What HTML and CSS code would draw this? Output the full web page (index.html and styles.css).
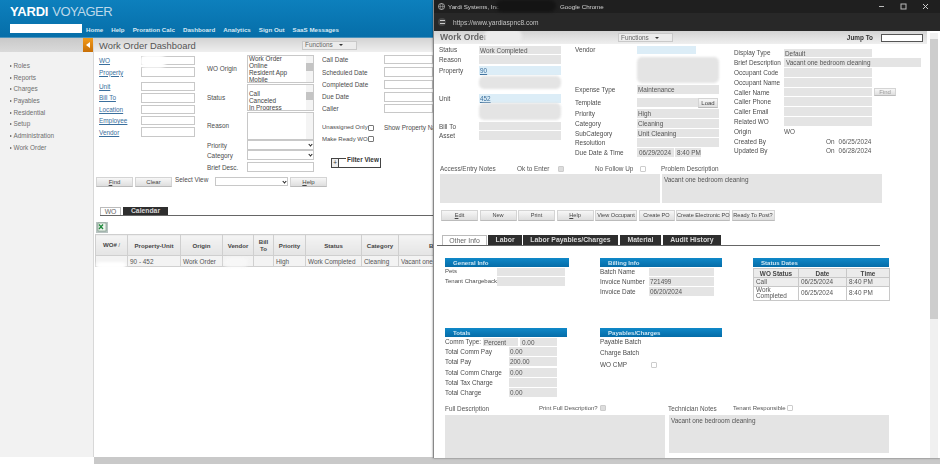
FILE: index.html
```html
<!DOCTYPE html>
<html lang="en">
<head>
<meta charset="utf-8">
<title>Work Order Dashboard</title>
<link rel="stylesheet" href="styles.css">
</head>
<body>
<div class="desktop">
  <div class="page">
    <header class="top">
      <div class="logo"><b>YARDI</b><span>VOYAGER</span></div>
      <div class="topnav">
        <div class="topsearch"></div>
        <nav class="navlinks"><a>Home</a><a>Help</a><a>Proration Calc</a><a>Dashboard</a><a>Analytics</a><a>Sign Out</a><a>SaaS Messages</a></nav>
      </div>
    </header>
    <div class="pagebody">
      <aside class="side">
        <div class="sidehead"><span class="collapse"><svg width="4" height="6" viewBox="0 0 4 6"><path d="M4 0v6L0 3z" fill="#fff"/></svg></span></div>
        <ul class="menu">
          <li>Roles</li><li>Reports</li><li>Charges</li><li>Payables</li><li>Residential</li><li>Setup</li><li>Administration</li><li>Work Order</li>
        </ul>
      </aside>
      <main class="dash">
        <div class="bar">
          <h1 class="dashtitle">Work Order Dashboard</h1>
          <div class="fnbtn dashfn">Functions <i class="caret"></i></div>
        </div>
        <div class="filters">
          <div class="fcol fcol1">
            <div class="frow"><a class="lnk">WO</a><span class="inp"></span></div>
            <div class="frow"><a class="lnk">Property</a><span class="inp"></span></div>
            <div class="frow mt3"><a class="lnk">Unit</a><span class="inp"></span></div>
            <div class="frow"><a class="lnk">Bill To</a><span class="inp"></span></div>
            <div class="frow"><a class="lnk">Location</a><span class="inp"></span></div>
            <div class="frow"><a class="lnk">Employee</a><span class="inp"></span></div>
            <div class="frow"><a class="lnk">Vendor</a><span class="inp"></span></div>
          </div>
          <div class="fcol fcol2">
            <div class="frow2 list"><label>WO Origin</label><div class="lbox"><div class="opts">Work Order<br>Online<br>Resident App<br>Mobile</div><div class="lscroll"><em></em></div></div></div>
            <div class="frow2 list"><label>Status</label><div class="lbox"><div class="opts"><br>Call<br>Canceled<br>In Progress</div><div class="lscroll"><em></em></div></div></div>
            <div class="frow2 list"><label>Reason</label><div class="lbox"><div class="opts"></div><div class="lscroll blank"></div></div></div>
            <div class="frow2"><label>Priority</label><div class="sel"><i class="chev"></i></div></div>
            <div class="frow2"><label>Category</label><div class="sel"><i class="chev"></i></div></div>
            <div class="frow2 mt1"><label>Brief Desc.</label><div class="sel"></div></div>
          </div>
          <div class="fcol fcol3">
            <div class="frow3"><label>Call Date</label><span class="inp"></span></div>
            <div class="frow3 g3"><label>Scheduled Date</label><span class="inp"></span></div>
            <div class="frow3 g4"><label>Completed Date</label><span class="inp"></span></div>
            <div class="frow3 g4"><label>Due Date</label><span class="inp"></span></div>
            <div class="frow3 g2"><label>Caller</label><span class="inp"></span></div>
            <div class="frow3 g6 tight"><label>Unassigned Only</label><span class="cbx"></span><label class="showprop">Show Property Name</label></div>
            <div class="frow3 g2 tight"><label>Make Ready WOs</label><span class="cbx"></span></div>
            <div class="filterview"><span class="plus">+</span><span class="legend">Filter View</span></div>
          </div>
        </div>
        <div class="finds">
          <button class="btn w37"><u>F</u>ind</button>
          <button class="btn w37">Clear</button>
          <span class="selview">Select View</span>
          <div class="sel viewsel"><i class="chev"></i></div>
          <button class="btn w37"><u>H</u>elp</button>
        </div>
        <div class="tabs dashtabs">
          <span class="tab on">WO</span><span class="tab">Calendar</span>
        </div>
        <div class="xl"><svg width="12" height="11" viewBox="0 0 12 11"><rect width="12" height="11" fill="#b9c4c2"/><rect x="2" y="1" width="8" height="8" fill="#eef4ee" stroke="#6d8f78" stroke-width=".6"/><path d="M3 2.5 7 7M7 2.5 3 7" stroke="#1f8a3c" stroke-width="1.3"/></svg></div>
        <div class="gridclip">
        <table class="grid">
          <colgroup><col class="c1"><col class="c2"><col class="c3"><col class="c4"><col class="c5"><col class="c6"><col class="c7"><col class="c8"><col class="c9"></colgroup>
          <thead><tr><th>WO# <small>/</small></th><th>Property-Unit</th><th>Origin</th><th>Vendor</th><th>Bill<br>To</th><th>Priority</th><th>Status</th><th>Category</th><th>Brief Description</th></tr></thead>
          <tbody><tr><td></td><td>90 - 452</td><td>Work Order</td><td></td><td></td><td>High</td><td>Work Completed</td><td>Cleaning</td><td>Vacant one bedroom cleaning</td></tr></tbody>
        </table>
        </div>
      </main>
    </div>
    <div class="hscroll"></div>
    <span class="blob b1"></span><span class="blob b2"></span><span class="blob b3"></span>
  </div>

  <section class="win">
    <div class="wintitle">
      <svg class="globe" width="7" height="7" viewBox="0 0 8 8"><circle cx="4" cy="4" r="3.5" fill="none" stroke="#ccc" stroke-width=".8"/><path d="M.5 4h7M4 .5c-2 2-2 5 0 7M4 .5c2 2 2 5 0 7" fill="none" stroke="#ccc" stroke-width=".5"/></svg>
      <span class="t1">Yardi Systems, Inc. -</span><span class="t2">Google Chrome</span>
      <div class="winctl">
        <svg width="7" height="7" viewBox="0 0 7 7"><path d="M1 3.5h5" stroke="#bbb"/></svg>
        <svg width="7" height="7" viewBox="0 0 7 7"><rect x="1" y="1" width="5" height="5" fill="none" stroke="#bbb"/></svg>
        <svg width="7" height="7" viewBox="0 0 7 7"><path d="m1 1 5 5M6 1 1 6" stroke="#ccc"/></svg>
      </div>
    </div>
    <div class="winurl">
      <span class="tune"><svg width="7" height="6" viewBox="0 0 7 6"><path d="M1 1.5h5M1 4.5h5" stroke="#ccc"/></svg></span>
      <span class="url">https://www.yardiaspnc8.com</span>
    </div>
    <div class="winbody">
      <div class="bar wbar">
        <h2 class="wtitle">Work Order</h2>
        <div class="fnbtn wfn">Functions <i class="caret"></i></div>
        <div class="jump"><b>Jump To</b><span class="jinp"></span></div>
      </div>
      <div class="wscroll"><em></em></div>
      <div class="wo">
        <div class="wcol wc1">
          <div class="wrow"><label>Status</label><span class="val">Work Completed</span></div>
          <div class="wrow"><label>Reason</label><span class="val"></span></div>
          <div class="wrow sp1"><label>Property</label><span class="val blue"><a class="lnk">90</a></span></div>
          <div class="wrow tall13 sp1"><label></label><span class="val mask"></span></div>
          <div class="wrow sp4"><label>Unit</label><span class="val blue"><a class="lnk">452</a></span></div>
          <div class="wrow tall16"><label></label><span class="val mask"></span></div>
          <div class="wrow sp1"><label>Bill To</label><span class="val"></span></div>
          <div class="wrow"><label>Asset</label><span class="val"></span></div>
        </div>
        <div class="wcol wc2">
          <div class="wrow"><label>Vendor</label><span class="val blue short"></span></div>
          <div class="wrow tall26 sp2"><label></label><span class="val mask"></span></div>
          <div class="wrow sp2"><label>Expense Type</label><span class="val">Maintenance</span></div>
          <div class="wrow sp3"><label>Template</label><span class="val tmpl"></span><button class="btn load">Load</button></div>
          <div class="wrow sp1"><label>Priority</label><span class="val">High</span></div>
          <div class="wrow"><label>Category</label><span class="val">Cleaning</span></div>
          <div class="wrow"><label>SubCategory</label><span class="val">Unit Cleaning</span></div>
          <div class="wrow"><label>Resolution</label><span class="val"></span></div>
          <div class="wrow"><label>Due Date &amp; Time</label><span class="val dd">06/29/2024</span><span class="val tm">8:40 PM</span></div>
        </div>
        <div class="wcol wc3">
          <div class="wrow sp3"><label>Display Type</label><span class="val">Default</span></div>
          <div class="wrow"><label>Brief Description</label><span class="val wide">Vacant one bedroom cleaning</span></div>
          <div class="wrow"><label>Occupant Code</label><span class="val"></span></div>
          <div class="wrow"><label>Occupant Name</label><span class="val"></span></div>
          <div class="wrow"><label>Caller Name</label><span class="val"></span><button class="btn find">Find</button></div>
          <div class="wrow"><label>Caller Phone</label><span class="val"></span></div>
          <div class="wrow"><label>Caller Email</label><span class="val"></span></div>
          <div class="wrow"><label>Related WO</label><span class="val"></span></div>
          <div class="wrow"><label>Origin</label><span class="plain">WO</span></div>
          <div class="wrow"><label>Created By</label><span class="stamp">On<i>06/25/2024</i></span></div>
          <div class="wrow"><label>Updated By</label><span class="stamp">On<i>06/28/2024</i></span></div>
        </div>
      </div>
      <div class="notehead">
        <span class="nh1">Access/Entry Notes</span><span class="nh2">Ok to Enter</span><span class="cbx off chk"></span>
        <span class="nh3">No Follow Up</span><span class="cbx off"></span><span class="nh4">Problem Description</span>
      </div>
      <div class="notes"><div class="area"></div><div class="area">Vacant one bedroom cleaning</div></div>
      <div class="wbtns">
        <button class="btn w37"><u>E</u>dit</button><button class="btn w37">New</button><button class="btn w37">Print</button><button class="btn w37"><u>H</u>elp</button>
        <button class="btn w42">View Occupant</button><button class="btn w36">Create PO</button><button class="btn w54">Create Electronic PO</button><button class="btn w43">Ready To Post?</button>
      </div>
      <div class="tabs wtabs">
        <span class="tab on">Other Info</span><span class="tab">Labor</span><span class="tab">Labor Payables/Charges</span><span class="tab">Material</span><span class="tab">Audit History</span>
      </div>
      <div class="sections">
        <div class="sec s1">
          <div class="shead">General Info</div>
          <div class="srow"><label>Pets</label><span class="val"></span></div>
          <div class="srow"><label>Tenant Chargeback</label><span class="val"></span></div>
        </div>
        <div class="sec s2">
          <div class="shead">Billing Info</div>
          <div class="srow"><label>Batch Name</label><span class="val"></span></div>
          <div class="srow"><label>Invoice Number</label><span class="val">721499</span></div>
          <div class="srow"><label>Invoice Date</label><span class="val">06/20/2024</span></div>
        </div>
        <div class="sec s3">
          <div class="shead">Status Dates</div>
          <table class="dates">
            <colgroup><col class="d1"><col class="d2"><col class="d3"></colgroup>
            <thead><tr><th>WO Status</th><th>Date</th><th>Time</th></tr></thead>
            <tbody><tr class="alt"><td>Call</td><td>06/25/2024</td><td>8:40 PM</td></tr><tr><td>Work Completed</td><td>06/25/2024</td><td>8:40 PM</td></tr></tbody>
          </table>
        </div>
      </div>
      <div class="sections second">
        <div class="sec s4">
          <div class="shead">Totals</div>
          <div class="srow comm"><label>Comm Type:</label><span class="val pct">Percent</span><span class="val amt">0.00</span></div>
          <div class="srow"><label>Total Comm Pay</label><span class="val">0.00</span></div>
          <div class="srow"><label>Total Pay</label><span class="val">200.00</span></div>
          <div class="srow sp1b"><label>Total Comm Charge</label><span class="val">0.00</span></div>
          <div class="srow"><label>Total Tax Charge</label><span class="val"></span></div>
          <div class="srow"><label>Total Charge</label><span class="val">0.00</span></div>
        </div>
        <div class="sec s2">
          <div class="shead">Payables/Charges</div>
          <div class="srow"><label>Payable Batch</label></div>
          <div class="srow sp2b"><label>Charge Batch</label></div>
          <div class="srow sp3b"><label>WO CMP</label><span class="cbx off"></span></div>
        </div>
      </div>
      <div class="deschead">
        <span class="dh1">Full Description</span><span class="dh2">Print Full Description?</span><span class="cbx off chk"></span>
        <span class="dh3">Technician Notes</span><span class="dh4">Tenant Responsible</span><span class="cbx off"></span>
      </div>
      <div class="descs"><div class="area big"></div><div class="area small">Vacant one bedroom cleaning</div></div>
      <span class="blob wb1"></span>
    </div>
    <span class="blob wb2"></span>
  </section>
</div>
</body>
</html>
```
FILE: styles.css
```css
*{box-sizing:border-box}
html,body{margin:0;padding:0;background:#fff}
body{width:940px;height:464px;overflow:hidden;font:6.4px/9px "Liberation Sans",Arial,sans-serif;color:#4c4c4c}
.desktop{position:relative;width:940px;height:464px;overflow:hidden;filter:blur(.3px)}
.page{display:flex;flex-direction:column;height:464px}
ul{list-style:none;margin:0;padding:0}
h1,h2{margin:0;font-weight:400}
label{display:block}

/* header */
.top{height:38px;flex:none;padding:5px 0 0 10px;background:linear-gradient(#0d80bd,#066ea9);border-bottom:1px solid #4a93bd}
.logo{font-size:13px;line-height:13px;color:#fff;height:18px;letter-spacing:-.2px}
.logo b{margin-right:4px}
.logo span{color:#bcd9ea;letter-spacing:-.5px}
.topnav{display:flex;align-items:center;height:10px}
.topsearch{width:72px;height:9px;background:#fff}
.navlinks{display:flex;gap:8px;margin-left:4px;padding-top:2px;font-size:6.2px;font-weight:700;color:#d6e8f3}

/* left */
.pagebody{flex:1;display:flex;min-height:0}
.side{width:94px;flex:none;background:#f2f2f2;border-right:1px solid #d8d8d8}
.sidehead{height:14px;background:linear-gradient(#c9c9c9,#dadada);display:flex;justify-content:flex-end}
.collapse{width:10px;height:14px;background:linear-gradient(#f29a1a,#c86f06);display:flex;align-items:center;justify-content:center}
.menu{padding:8px 0 0 10px;color:#6e6e6e}
.menu li{height:11.7px;line-height:11.7px;display:flex;align-items:center;gap:1.5px}
.menu li:before{content:"";border-left:2px solid #555;border-top:1.5px solid transparent;border-bottom:1.5px solid transparent}
.dash{flex:1;min-width:0;background:#fff}
.bar{height:14px;background:linear-gradient(#d3d3d3,#efefef);display:flex;align-items:center}
.dashtitle{font-size:9.4px;color:#555;margin-left:5px;width:203px}
.fnbtn{height:9px;line-height:8px;border:1px solid #c9c9c9;background:#ececec;color:#666;padding-left:2px;display:flex;align-items:center;gap:3px}
.dashfn{width:55px}
.caret{border-top:2px solid #333;border-left:2px solid transparent;border-right:2px solid transparent;margin-left:3px}

/* filter form */
.filters{display:flex;height:124px;padding:3px 0 0 5px;overflow:hidden}
.fcol{display:flex;flex-direction:column;flex:none}
.fcol1{width:108px;gap:2px;padding-top:1px}
.frow{display:flex;height:9.4px;align-items:center}
.frow .lnk{width:42px}
.lnk{color:#3a6f9d;text-decoration:underline}
.inp{display:block;height:9.4px;border:1px solid #c8c8c8;background:#fff;width:54px}
.mt3{margin-top:3px}
.mt1{margin-top:2px}
.fcol2{width:115px;gap:1px}
.frow2{display:flex;align-items:center;height:9px}
.frow2 label{width:40px}
.frow2.list{height:27.5px}
.lbox{width:67px;height:27.5px;border:1px solid #c8c8c8;display:flex;font-size:6.4px;line-height:6.9px;color:#444}
.opts{flex:1;padding-left:1px;overflow:hidden;white-space:nowrap}
.lscroll{width:7px;background:#f4f4f4;padding-top:7px}
.lscroll em{display:block;height:8px;background:#c4c4c4}
.sel{position:relative;width:67px;height:9.4px;border:1px solid #c8c8c8;background:#fff}
.chev{position:absolute;right:1px;top:2px;width:3px;height:3px;border-right:1px solid #222;border-bottom:1px solid #222;transform:rotate(45deg)}
.fcol3{width:111px;overflow:hidden}
.frow3{display:flex;align-items:center;height:9.4px;white-space:nowrap}
.frow3 label{flex:none}
.frow3 label:first-child{width:62px}
.frow3 .inp{width:60px}
.tight label:first-child{font-size:6px;width:46px}
.g2{margin-top:2px}.g3{margin-top:3px}.g4{margin-top:3px}.g6{margin-top:10px}
.cbx{display:block;flex:none;width:6px;height:6px;border:1px solid #777;background:#fff;border-radius:1px}
.showprop{margin-left:10px}
.cbx.off{border-color:#ccc}
.cbx.chk{background:#ddd}
.filterview{position:relative;flex:none;margin:14px 0 0 9px;width:50px;height:10px;border:1px solid #444;color:#333;display:flex}
.plus{width:7px;border-right:1px solid #444;text-align:center;background:#eee;line-height:8px}
.legend{position:absolute;left:14px;top:-3px;background:#fff;font-weight:700;padding:0 1px;line-height:7px}

.finds{display:flex;align-items:center;height:11px;padding-left:2px;gap:2px}
.btn{display:block;height:10px;padding:0;border:1px solid #d4d4d4;border-bottom-color:#bbb;background:linear-gradient(#f7f7f7,#dedede);font:6px/8px "Liberation Sans",Arial,sans-serif;color:#444;flex:none;white-space:nowrap}
.w37{width:37px}.w42{width:42px}.w36{width:36px}.w54{width:54px}.w43{width:43px}
.selview{width:39px;padding-left:1px;margin-top:-4px}
.viewsel{width:73px}
.tabs{display:flex;align-items:flex-end;border-bottom:1px solid #666;gap:1px;font-weight:700}
.tab{display:block;background:#2e2e2e;color:#d8d8d8;text-align:center}
.tab.on{background:#fff;color:#666;font-weight:400;border:1px solid #bbb;border-bottom:0}
.dashtabs{height:9px;margin:20px 0 0 6px}
.dashtabs .tab{font-size:6.8px;line-height:8px;height:8px}
.dashtabs .tab:first-child{width:21px}
.dashtabs .tab:last-child{width:45px;margin-left:1px}
.xl{margin:6px 0 0 2px;height:12px}
.xl svg{display:block}
.gridclip{width:338px;margin-left:1px;overflow:hidden}
.grid{border-collapse:collapse;table-layout:fixed;width:413px}
.c1{width:32px}.c2{width:53px}.c3{width:42px}.c4{width:31px}.c5{width:20px}.c6{width:32px}.c7{width:56px}.c8{width:37px}.c9{width:110px}
.grid th{height:21px;background:linear-gradient(#f4f4f4,#e4e4e4);border:1px solid #cfcfcf;font-size:6.1px;line-height:7px;color:#444;padding:0}
.grid small{font-weight:400;font-size:5px}
.grid td{height:11px;background:#f3f3f3;border:1px solid #d0d0d0;padding:0 0 0 2px;white-space:nowrap;overflow:hidden;color:#555}
.hscroll{height:7px;margin-left:94px;background:#c9c9c9;flex:none}

/* chrome window */
.win{position:absolute;left:433px;top:0;width:507px;height:458px;background:#fff;border-left:1px solid #888;box-shadow:0 0 2px rgba(0,0,0,.5);display:flex;flex-direction:column}
.wintitle{height:13px;flex:none;background:#1f1f1f;color:#d4d4d4;display:flex;align-items:center;padding-left:4px;font-size:6.2px}
.t1{margin-left:3px;width:112px}
.winctl{margin-left:auto;display:flex;gap:15px;padding-right:11px}
.winctl svg{display:block}
.globe{display:block}
.winurl{height:18px;flex:none;background:#282828;color:#c4c4c4;display:flex;align-items:center;padding-left:4px;font-size:6.6px}
.tune{width:8px;height:8px;border-radius:50%;background:#444;display:flex;align-items:center;justify-content:center}
.url{margin-left:7px}
.winbody{position:relative;flex:1;min-height:0;overflow:hidden;margin-right:2px}
.wbar{height:13px;padding-left:6px;margin-right:11px}
.wtitle{font-size:8.6px;font-weight:700;color:#666;width:178px}
.wfn{width:55px}
.jump{margin-left:auto;display:flex;align-items:center;color:#333;gap:8px;margin-right:4px}
.jinp{display:block;width:42px;height:8px;background:#fff;border:1px solid #555}
.wscroll{position:absolute;right:0;top:2px;bottom:0;width:8px;background:#f0f0f0;padding-top:6px}
.wscroll em{display:block;height:280px;background:#cdcdcd}
.wo{display:flex;padding:1px 0 0 5px;height:120px}
.wcol{flex:none;display:flex;flex-direction:column}
.wrow{display:flex;align-items:center;min-height:9.8px;white-space:nowrap}
.wc1{width:136px}.wc1 label{width:40px}
.wc2{width:159px}.wc2 label{width:62px}
.wc3{width:195px}.wc3 label{width:50px}
.val{display:block;height:8.8px;line-height:9px;background:#e4e4e4;padding-left:1px;color:#555}
.wc1 .val{width:82px}
.wc2 .val{width:82px}
.wc3 .val{width:88px}
.wc2 .val.short{width:59px}
.wc2 .val.tmpl{width:61px}
.wc2 .val.dd{width:37px;margin-right:1px;padding-left:2px}
.wc2 .val.tm{width:26px;padding-left:2px}
.wc3 .val.wide{width:137px;padding-left:2px}
.val.blue{background:#dcedf7}
.tall13{height:13px}.tall13 .val{height:13px}
.tall16{height:17px}.tall16 .val{height:17px}
.tall26{height:26px}.tall26 .val{height:26px}
.val.mask{border-radius:5px;filter:blur(1px)}
.sp1{margin-top:1px}.sp2{margin-top:2px}.sp3{margin-top:3px}.sp4{margin-top:4px}
.load{width:20px;height:10px;margin-left:0}
.find{width:22px;height:8px;margin-left:2px;color:#999;line-height:6px}
.plain{color:#555}
.stamp{margin-left:42px;color:#555}
.stamp i{font-style:normal;margin-left:4px;letter-spacing:.1px}
.notehead{display:flex;align-items:center;height:9px;padding-left:6px;color:#555;white-space:nowrap}
.nh1{width:77px}.nh2{width:41px}.nh3{margin-left:31px;width:45px}.nh4{margin-left:15px}
.notes{display:flex;gap:2px;padding:1px 0 0 6px}
.area{width:220px;height:29px;background:#e4e4e4;padding:1px 2px;color:#555}
.wbtns{display:flex;gap:1.5px;padding:7px 0 0 7px}
.wbtns .btn{height:10.5px;font-size:5.6px}
.wtabs{height:11px;margin:14px 0 0 3px;width:443px;font-size:6.9px;padding-left:5px;white-space:nowrap}
.wtabs .tab{height:10px;line-height:9px}
.wtabs .tab:nth-child(1){width:45px}
.wtabs .tab:nth-child(2){width:34px}
.wtabs .tab:nth-child(3){width:95px}
.wtabs .tab:nth-child(4){width:41px;margin-left:1px}
.wtabs .tab:nth-child(5){width:58px;margin-left:1px}
.sections{display:flex;padding:12px 0 0 11px;height:82px}
.sections.second{padding-top:0;height:76px}
.sec{flex:none}
.shead{height:9.5px;line-height:9.5px;background:linear-gradient(#0f88c8,#056ca8);color:#cfe6f3;font-weight:700;padding-left:8px;font-size:6.1px}
.s1{width:155px}.s1 .shead{width:124px}
.s2{width:153px}.s2 .shead{width:122px}
.s3{width:136px}
.s4{width:155px}.s4 .shead{width:122px}
.srow{display:flex;align-items:center;min-height:9.9px;white-space:nowrap}
.srow label{flex:none}
.s1 label{width:52px;font-size:6px}.s1 .val{width:68px}
.s2 label{width:49px}.s2 .val{width:65px;padding-left:1px}
.s2 .cbx{margin-left:2px}
.s4 label{width:64px}.s4 .val{width:48px;padding-left:1px}
.s4 .comm label{width:38px}
.s4 .pct{width:35px}
.s4 .amt{width:37px;margin-left:2px;padding-left:2px}
.sp1b{margin-top:1px}.sp2b{margin-top:1px}.sp3b{margin-top:2px}
.dates{border-collapse:collapse;table-layout:fixed;width:136px;margin-top:1px}
.d1{width:45px}.d2{width:48px}.d3{width:43px}
.dates th{height:9px;padding:0;background:#ebebeb;border:1px solid #c8c8c8;line-height:7px;color:#444}
.dates td{height:8.5px;border:1px solid #c8c8c8;padding:0 2px;line-height:6.5px;color:#555}
.dates .alt td{background:#ededed}
.deschead{display:flex;align-items:center;height:9px;padding:0 0 0 11px;color:#555;white-space:nowrap}
.dh1{width:94px}.dh2{width:61px;font-size:6px}.dh3{margin-left:62px;width:65px}.dh4{width:54px;font-size:6px}
.descs{display:flex;gap:4px;padding:2px 0 0 11px}
.area.big{height:46px}
.area.small{height:38px;padding-left:2px}

/* redactions */
.blob{position:absolute;display:block;border-radius:6px;filter:blur(1.5px)}
.b1{left:140px;top:55px;width:26px;height:13px;background:#fff}
.b2{left:96px;top:262px;width:30px;height:7px;background:#fff}
.b3{left:224px;top:258px;width:24px;height:9px;background:#f7f7f7}
.wb1{left:50px;top:-1px;width:38px;height:13px;background:#ececec}
.wb2{left:62px;top:0;width:60px;height:12px;background:#141414}
```
